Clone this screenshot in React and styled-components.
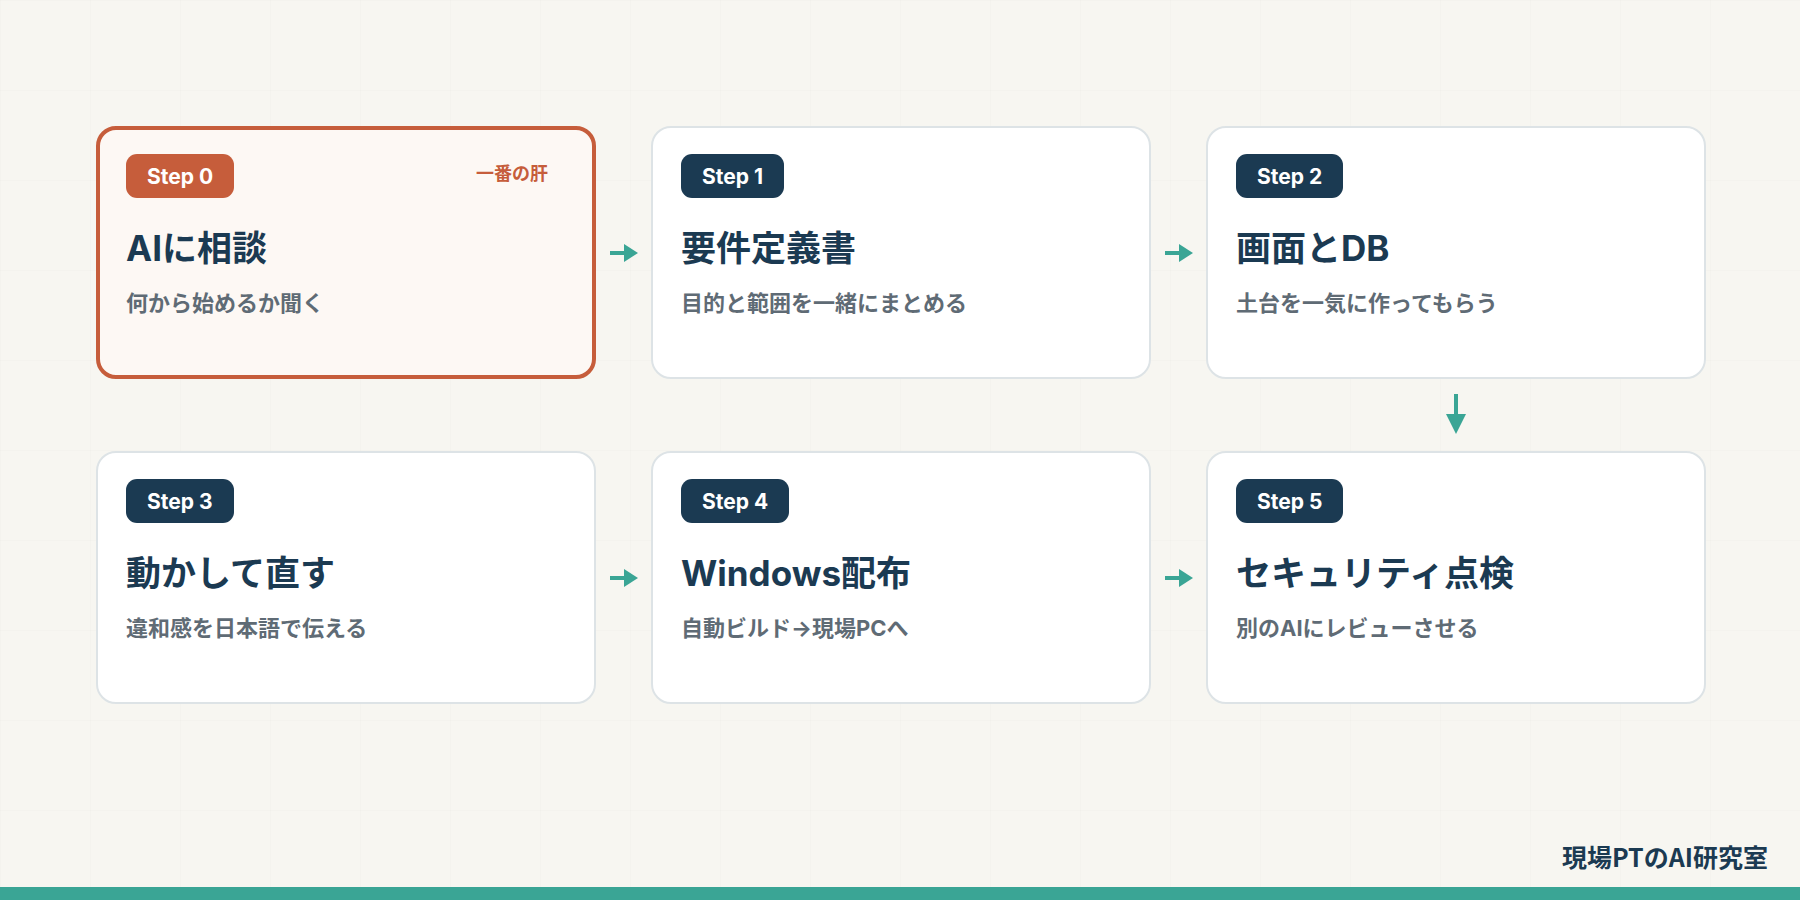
import React from "react";
import styled, { createGlobalStyle } from "styled-components";

const Global = createGlobalStyle`
  html, body { margin: 0; padding: 0; }
  body { font-family: Inter, "Noto Sans CJK JP", sans-serif; }
`;

const Page = styled.div`
  width: 1800px; height: 900px; position: relative; overflow: hidden;
  background-color: #f7f6f1;
  background-image:
    linear-gradient(rgba(0,0,0,0.012) 1px, transparent 1px),
    linear-gradient(90deg, rgba(0,0,0,0.012) 1px, transparent 1px);
  background-size: 90px 90px;
  display: flex; flex-direction: column;
`;

const Flow = styled.div`
  margin: 126px 0 0 96px;
  display: grid;
  grid-template-columns: 500px 55px 500px 55px 500px;
  grid-template-rows: 253px 72px 253px;
`;

const Card = styled.div`
  box-sizing: border-box;
  border-radius: 20px;
  border: ${p => (p.$hl ? "4px solid #c65d3b" : "2px solid #dde3e6")};
  background: ${p => (p.$hl ? "#fdf8f4" : "#ffffff")};
  padding: ${p => (p.$hl ? "24px 26px" : "26px 28px")};
  display: flex; flex-direction: column; position: relative;
`;

const Badge = styled.div`
  align-self: flex-start;
  height: 44px; padding: 0 21px; border-radius: 11px;
  background: ${p => (p.$hl ? "#c65d3b" : "#1b3a52")};
  color: #fff; font: 700 21px Inter, "Noto Sans CJK JP", sans-serif;
  display: flex; align-items: center;
`;

const Tag = styled.div`
  position: absolute; top: 29px; right: 44px;
  color: #c65d3b; font: 700 18px "Noto Sans CJK JP", sans-serif;
`;

const Title = styled.div`
  margin-top: 22px; color: #1b3a52;
  font: 700 35px Inter, "Noto Sans CJK JP", sans-serif;
`;

const Sub = styled.div`
  margin-top: 14px; color: #5f6b75;
  font: 700 22px Inter, "Noto Sans CJK JP", sans-serif;
`;

const Cell = styled.div`
  display: flex; align-items: center; justify-content: center;
`;

const Footer = styled.div`
  position: absolute; right: 32px; bottom: 26px;
  color: #1b3a52; font: 700 25px "Noto Sans CJK JP", sans-serif;
`;

const Bar = styled.div`
  position: absolute; left: 0; right: 0; bottom: 0; height: 13px; background: #3aa595;
`;

const Right = () => (
  <svg width="32" height="22" viewBox="0 0 32 22">
    <rect x="2" y="9" width="18" height="4" fill="#3aa595" />
    <polygon points="16,2 30,11 16,20" fill="#3aa595" />
  </svg>
);
const Down = () => (
  <svg width="24" height="42" viewBox="0 0 24 42">
    <rect x="10" y="0" width="4" height="26" fill="#3aa595" />
    <polygon points="2,20 22,20 12,40" fill="#3aa595" />
  </svg>
);

const steps = [
  ["Step 0", "AIに相談", "何から始めるか聞く", true],
  ["Step 1", "要件定義書", "目的と範囲を一緒にまとめる"],
  ["Step 2", "画面とDB", "土台を一気に作ってもらう"],
  ["Step 3", "動かして直す", "違和感を日本語で伝える"],
  ["Step 4", "Windows配布", "自動ビルド→現場PCへ"],
  ["Step 5", "セキュリティ点検", "別のAIにレビューさせる"],
];

const StepCard = ({ s }) => (
  <Card $hl={s[3]}>
    <Badge $hl={s[3]}>{s[0]}</Badge>
    {s[3] && <Tag>一番の肝</Tag>}
    <Title>{s[1]}</Title>
    <Sub>{s[2]}</Sub>
  </Card>
);

export default function App() {
  return (
    <Page>
      <Global />
      <Flow>
        <StepCard s={steps[0]} />
        <Cell><Right /></Cell>
        <StepCard s={steps[1]} />
        <Cell><Right /></Cell>
        <StepCard s={steps[2]} />
        <div /><div /><div /><div />
        <Cell><Down /></Cell>
        <StepCard s={steps[3]} />
        <Cell><Right /></Cell>
        <StepCard s={steps[4]} />
        <Cell><Right /></Cell>
        <StepCard s={steps[5]} />
      </Flow>
      <Footer>現場PTのAI研究室</Footer>
      <Bar />
    </Page>
  );
}
